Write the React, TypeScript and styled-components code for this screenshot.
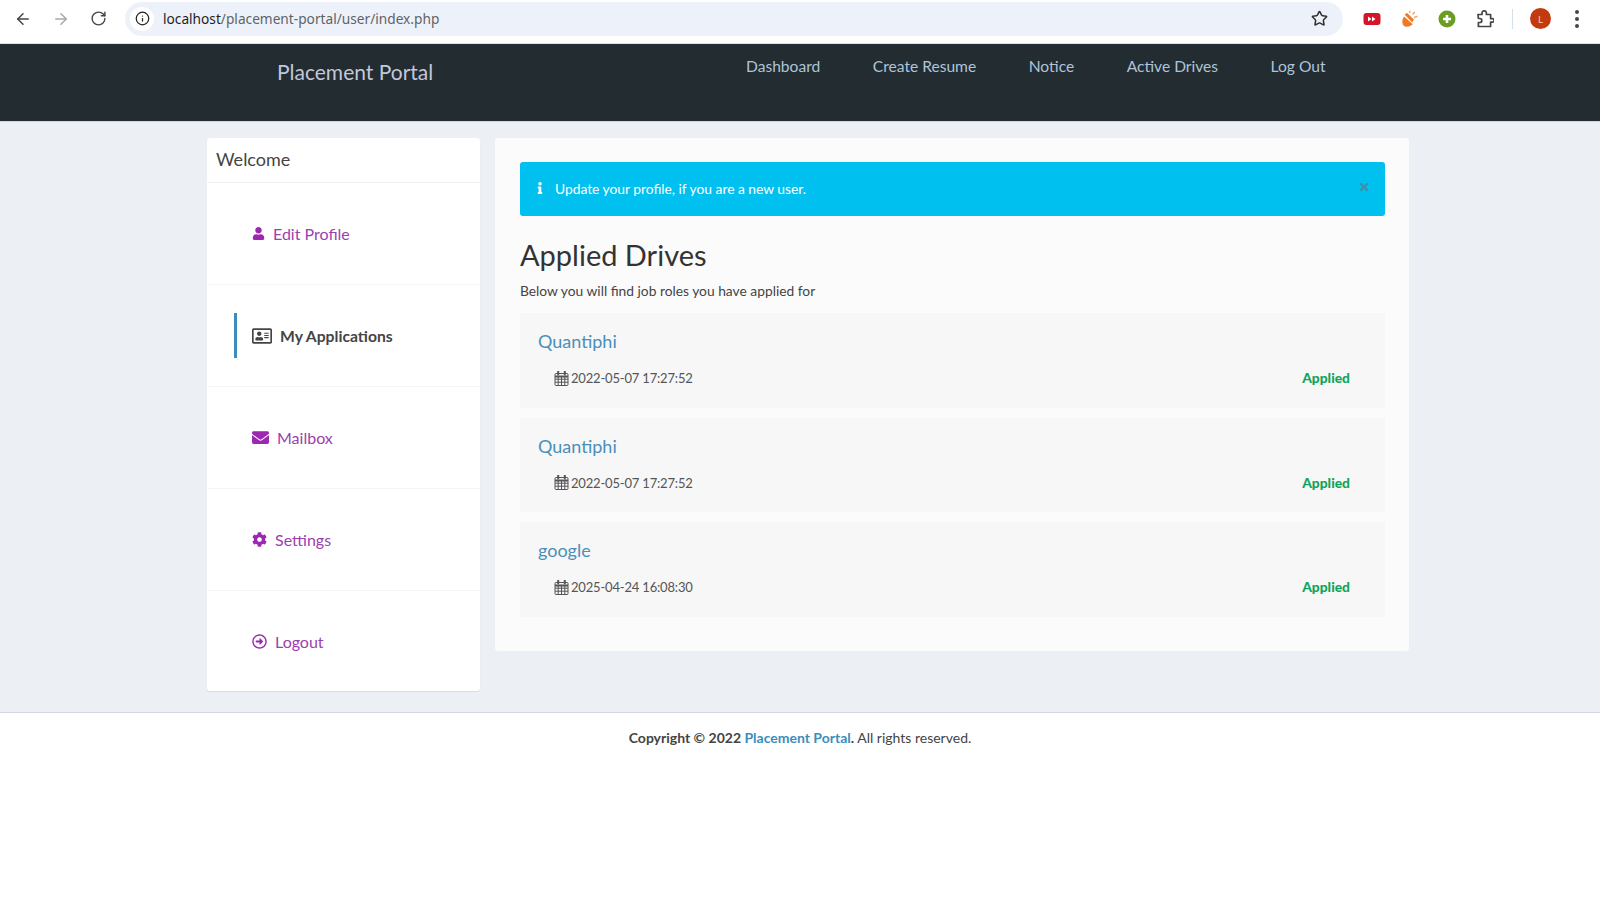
import React from "react";
import styled, { createGlobalStyle } from "styled-components";
import { ArrowLeft, ArrowRight, RotateCw, Info, Star } from "lucide-react";
import { FaUser, FaRegAddressCard, FaEnvelope, FaCog, FaRegArrowAltCircleRight, FaInfo, FaTimes } from "react-icons/fa";

const Global = createGlobalStyle`
  html, body { margin: 0; padding: 0; height: 100%; background: #fff; }
  body { font-family: Lato, "Noto Sans", sans-serif; color: #333; }
  * { box-sizing: border-box; }
  a { text-decoration: none; }
`;

const Page = styled.div`
  display: flex;
  flex-direction: column;
  height: 902px;
  overflow: hidden;
`;

const Chrome = styled.div`
  display: flex;
  align-items: center;
  height: 44px;
  padding: 0 0 6px 14px;
  background: #fff;
  border-bottom: 1px solid #dfe3e8;
`;

const NavIcons = styled.div`
  display: flex;
  flex: none;
  align-items: center;
  gap: 20px;
  width: 111px;
  color: #444746;
`;

const Omnibox = styled.div`
  display: flex;
  flex: none;
  align-items: center;
  width: 1218px;
  height: 34px;
  padding: 0 15px 0 5px;
  border-radius: 17px;
  background: #edf2fa;
`;

const InfoBubble = styled.span`
  display: flex;
  align-items: center;
  justify-content: center;
  width: 24px;
  height: 24px;
  border-radius: 50%;
  background: #fff;
  color: #222;
`;

const Url = styled.span`
  flex: 1;
  margin-left: 9px;
  font-family: "Noto Sans", sans-serif;
  font-size: 13.7px;
  color: #5f6368;
  b { font-weight: 400; color: #1f1f1f; }
`;

const Extensions = styled.div`
  display: flex;
  flex: none;
  align-items: center;
  margin-left: 19px;
  color: #444746;
`;

const ExtSlot = styled.span<{ $w: number }>`
  display: flex;
  align-items: center;
  justify-content: center;
  width: ${(p) => p.$w}px;
`;

const Divider = styled.span`
  width: 1px;
  height: 20px;
  margin: 0 17px 0 0;
  background: #d5e0ee;
`;

const Avatar = styled.span`
  display: flex;
  align-items: center;
  justify-content: center;
  width: 21px;
  height: 21px;
  margin-right: 6px;
  border-radius: 50%;
  background: #c23b0e;
  color: #f6c9b6;
  font-size: 10px;
`;

const Dots = styled.span`
  display: flex;
  flex-direction: column;
  gap: 3px;
  i { width: 4px; height: 4px; border-radius: 50%; background: #444746; }
`;

const TopBar = styled.header`
  display: flex;
  align-items: flex-start;
  height: 78px;
  padding: 13px 0 0 277px;
  background: #222c31;
  border-bottom: 1px solid #cfd6dc;
`;

const Brand = styled.a`
  width: 469px;
  color: #c2c7d9;
  font-size: 21px;
  line-height: 30px;
`;

const TopNav = styled.nav`
  display: flex;
  gap: 52.5px;
`;

const TopLink = styled.a`
  color: #afc4d8;
  font-size: 15.6px;
  line-height: 19px;
`;

const Body = styled.main`
  display: flex;
  flex: none;
  align-items: flex-start;
  gap: 15px;
  height: 591px;
  padding: 16px 0 0 207px;
  background: #ecf0f5;
  border-bottom: 1px solid #d2d6de;
`;

const Sidebar = styled.aside`
  width: 273px;
  background: #fff;
  border-radius: 3px;
  box-shadow: 0 1px 1px rgba(0, 0, 0, 0.08);
`;

const SideHead = styled.div`
  height: 45px;
  padding-left: 9px;
  border-bottom: 1px solid #f2f2f2;
  color: #444;
  font-size: 18px;
  line-height: 42px;
`;

const SideItem = styled.div`
  display: flex;
  align-items: center;
  height: 102px;
  padding-left: 27px;
  border-bottom: 1px solid #f4f4f4;
  &:last-child { border-bottom: 0; height: 100px; }
`;

const SideLink = styled.a<{ $active?: boolean; $gap: number }>`
  display: flex;
  align-items: center;
  gap: ${(p) => p.$gap}px;
  height: 45px;
  padding-left: ${(p) => (p.$active ? 15 : 18)}px;
  border-left: ${(p) => (p.$active ? "3px solid #3c8dbc" : "0")};
  color: ${(p) => (p.$active ? "#444" : "#9b3fae")};
  font-size: ${(p) => (p.$active ? 15.7 : 16)}px;
  font-weight: ${(p) => (p.$active ? 700 : 400)};
  svg { color: ${(p) => (p.$active ? "#444" : "#9c27b0")}; }
`;

const Panel = styled.section`
  width: 914px;
  height: 513px;
  padding: 24px 24px 0 25px;
  background: #fbfbfb;
  border-radius: 3px;
`;

const Alert = styled.div`
  display: flex;
  align-items: center;
  height: 54px;
  padding: 0 15px 2px 14px;
  border-radius: 3px;
  background: #00c0ef;
  color: #fff;
  font-size: 13.8px;
`;

const AlertText = styled.span`
  flex: 1;
  margin-left: 9px;
`;

const Close = styled.span`
  display: flex;
  margin-bottom: 2px;
  color: #3f8ea8;
`;

const Title = styled.h1`
  margin: 18px 0 0;
  color: #333;
  font-size: 29px;
  font-weight: 400;
  line-height: 41px;
`;

const Lead = styled.p`
  margin: 6px 0 12px;
  color: #444;
  font-size: 13.8px;
  line-height: 20px;
`;

const Drives = styled.div`
  display: flex;
  flex-direction: column;
  gap: 10px;
`;

const Drive = styled.article`
  height: 94.5px;
  padding: 16px 35px 0 18px;
  background: #f7f7f7;
`;

const DriveName = styled.a`
  display: block;
  color: #4a8fb9;
  font-size: 18px;
  line-height: 24px;
`;

const DriveMeta = styled.div`
  display: flex;
  align-items: center;
  justify-content: space-between;
  margin-top: 15px;
  padding-left: 16px;
  font-size: 14px;
  line-height: 20px;
`;

const DriveDate = styled.span`
  display: flex;
  align-items: center;
  gap: 2px;
  color: #555;
  font-size: 13px;
  letter-spacing: -0.18px;
`;

const Status = styled.strong`
  color: #11a55c;
  font-weight: 900;
  font-size: 13.8px;
`;

const Footer = styled.footer`
  flex: 1;
  padding-top: 15px;
  background: #fff;
  color: #444;
  font-size: 14px;
  line-height: 20px;
  text-align: center;
  a { color: #3c8dbc; }
`;

const drives = [
  { name: "Quantiphi", date: "2022-05-07 17:27:52" },
  { name: "Quantiphi", date: "2022-05-07 17:27:52" },
  { name: "google", date: "2025-04-24 16:08:30" },
];

function CalendarIcon() {
  return (
    <svg width="15" height="15" viewBox="0 0 15 15" fill="none" stroke="#555" strokeWidth="1">
      <rect x="1" y="2.5" width="13" height="12" rx="1" />
      <path d="M1 5.5h13" strokeWidth="2" />
      <path d="M1 8.2h13M1 11.2h13M4.2 6v8.5M7.5 6v8.5M10.8 6v8.5" />
      <path d="M4.2 .5v3M10.8 .5v3" strokeWidth="2" strokeLinecap="round" />
    </svg>
  );
}

export default function App() {
  return (
    <Page>
      <Global />
      <Chrome>
        <NavIcons>
          <ArrowLeft size={18} />
          <ArrowRight size={18} color="#a6a8ab" />
          <RotateCw size={17} />
        </NavIcons>
        <Omnibox>
          <InfoBubble><Info size={15} /></InfoBubble>
          <Url><b>localhost</b>/placement-portal/user/index.php</Url>
          <Star size={17} color="#333" strokeWidth={2.2} />
        </Omnibox>
        <Extensions>
          <ExtSlot $w={20}>
            <svg width="18" height="14" viewBox="0 0 18 14">
              <rect x="0.5" y="1" width="17" height="12" rx="3" fill="#d3142a" />
              <path d="M5 4.5 8.5 7 5 9.5ZM9 4.5 12.5 7 9 9.5Z" fill="#fff" />
            </svg>
          </ExtSlot>
          <ExtSlot $w={55}>
            <svg width="18" height="18" viewBox="0 0 18 18">
              <path d="M3 6.5C1 9.5 .8 13.5 2.6 15.5 4.8 17.7 9 16.8 11.8 14.2Z" fill="#f47721" />
              <path d="M3.6 4.6 6.2 3l6.6 6.6-1.6 2.8Z" fill="#f47721" />
              <path d="M9 3 8.6.8M11.5 4.5 13.8 2M13 7.5l3.5-1.2" stroke="#f0a878" strokeWidth="1.5" />
            </svg>
          </ExtSlot>
          <ExtSlot $w={20}>
            <svg width="18" height="18" viewBox="0 0 18 18">
              <circle cx="9" cy="9" r="8.5" fill="#6a9d22" />
              <path d="M9 5v8M5 9h8" stroke="#fff" strokeWidth="2.6" />
            </svg>
          </ExtSlot>
          <ExtSlot $w={55}>
            <svg width="18" height="18" viewBox="0 0 18 18" fill="none" stroke="#444746" strokeWidth="1.7" strokeLinejoin="round">
              <path d="M2 4.5h4V3a2 2 0 0 1 4.4 0v1.5h4.2v4.2H16.4a1.7 1.7 0 0 1 0 3.4h-1.8V16.5H2.4v-4h1.4a2 2 0 0 0 0-4H2.4Z" />
            </svg>
          </ExtSlot>
          <Divider />
          <Avatar>L</Avatar>
          <ExtSlot $w={40}><Dots><i /><i /><i /></Dots></ExtSlot>
        </Extensions>
      </Chrome>
      <TopBar>
        <Brand>Placement Portal</Brand>
        <TopNav>
          {["Dashboard", "Create Resume", "Notice", "Active Drives", "Log Out"].map((l) => (
            <TopLink key={l}>{l}</TopLink>
          ))}
        </TopNav>
      </TopBar>
      <Body>
        <Sidebar>
          <SideHead>Welcome</SideHead>
          <SideItem><SideLink $gap={8}><FaUser size={13} />Edit Profile</SideLink></SideItem>
          <SideItem><SideLink $active $gap={8}><FaRegAddressCard size={20} />My Applications</SideLink></SideItem>
          <SideItem><SideLink $gap={8}><FaEnvelope size={17} />Mailbox</SideLink></SideItem>
          <SideItem><SideLink $gap={8}><FaCog size={15} />Settings</SideLink></SideItem>
          <SideItem><SideLink $gap={8}><FaRegArrowAltCircleRight size={15} />Logout</SideLink></SideItem>
        </Sidebar>
        <Panel>
          <Alert>
            <FaInfo size={12} />
            <AlertText>Update your profile, if you are a new user.</AlertText>
            <Close><FaTimes size={12} /></Close>
          </Alert>
          <Title>Applied Drives</Title>
          <Lead>Below you will find job roles you have applied for</Lead>
          <Drives>
            {drives.map((d, i) => (
              <Drive key={i}>
                <DriveName>{d.name}</DriveName>
                <DriveMeta>
                  <DriveDate><CalendarIcon />{d.date}</DriveDate>
                  <Status>Applied</Status>
                </DriveMeta>
              </Drive>
            ))}
          </Drives>
        </Panel>
      </Body>
      <Footer>
        <strong>Copyright © 2022 <a>Placement Portal</a>.</strong> All rights reserved.
      </Footer>
    </Page>
  );
}
